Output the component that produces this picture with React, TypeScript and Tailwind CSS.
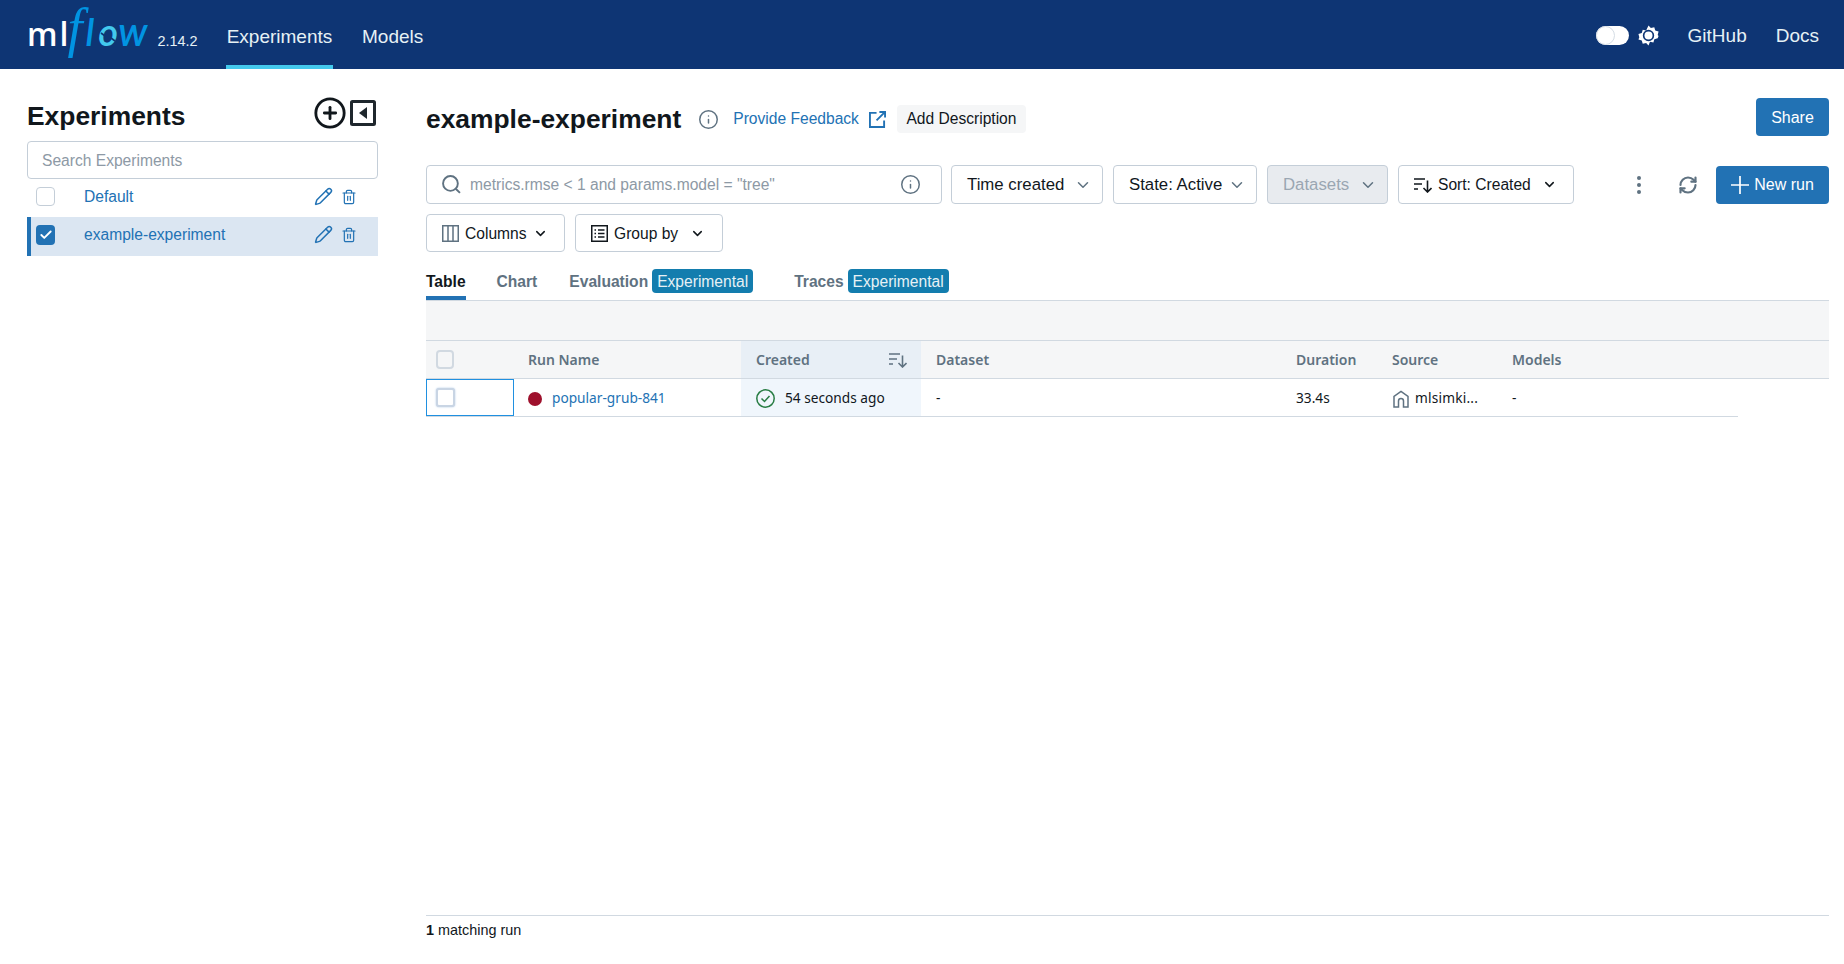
import type { ReactNode } from "react";
import { Check, ChevronDown, CirclePlus, Info, Pencil, RefreshCw, Trash2 } from "lucide-react";

function Logo() {
  return (
    <div className="ml-[27px] flex h-full w-[199px] items-end pb-[11px]">
      <span className="flex items-baseline leading-none">
        <span className="[font-family:'Open_Sans',sans-serif] text-[32px] font-semibold tracking-[2px] text-white">ml</span>
        <span className="ml-[-7px] px-[4px] [font-family:'Liberation_Serif',serif] text-[54px] italic leading-[60px] text-[#0194e2]">f</span>
        <span className="ml-[-1px] [font-family:'Lato',sans-serif] text-[38px] font-semibold italic text-[#0194e2]">l</span>
        <span className="relative ml-[4px] [font-family:'Lato',sans-serif] text-[38px] font-semibold italic text-[#43c9ed]">
          o
          <svg viewBox="0 0 20 20" className="absolute bottom-[3px] left-0 h-[20px] w-[20px]" fill="none" stroke="#0e3574" strokeWidth="1.6">
            <path d="M3 6l4 3M17 14l-4-3" />
          </svg>
        </span>
        <span className="[font-family:'Lato',sans-serif] text-[40px] font-semibold italic tracking-[1px] text-[#0194e2]">w</span>
        <span className="ml-[9px] text-[14.4px] text-[#e6f1f5]">2.14.2</span>
      </span>
    </div>
  );
}

function Header() {
  return (
    <header className="flex h-[69px] shrink-0 items-stretch bg-[#0e3574] text-[#e6f1f5]">
      <Logo />
      <nav className="flex gap-[29px] text-[19px]">
        <div className="flex w-[107px] items-center justify-center border-b-4 border-[#43c9ed] pt-[9px]">Experiments</div>
        <div className="flex items-center pt-[5px]">Models</div>
      </nav>
      <div className="ml-auto flex items-center pr-[25px] pt-[4px] text-[19px]">
        <div className="relative mb-[3px] h-[19px] w-[33px] rounded-full bg-white">
          <span className="absolute left-0 top-0 h-[19px] w-[19px] rounded-full border border-[#d5dde5] bg-white" />
        </div>
        <svg viewBox="0 0 24 24" className="mb-[3px] ml-[9px] h-[21px] w-[21px]" fill="#ffffff">
          <path fillRule="evenodd" d="M12 .5l2.7 3 3.9-1 1.1 3.8 3.8 1.1-1 3.9 1 1.4-1 2.5-3.8 1.1-1.1 3.8-3.9-1L12 23.5l-2.7-3-3.9 1-1.1-3.8-3.8-1.1 1-2.5-1-3.9 3.8-1.1 1.1-3.8 3.9 1L12 .5zM12 5.5a6.5 6.5 0 1 0 0 13 6.5 6.5 0 0 0 0-13z" />
          <circle cx="12" cy="12" r="4.6" />
        </svg>
        <span className="ml-[29px]">GitHub</span>
        <span className="ml-[29px]">Docs</span>
      </div>
    </header>
  );
}

function CheckBox({ checked = false }: { checked?: boolean }) {
  return checked ? (
    <span className="flex h-[20px] w-[19px] items-center justify-center rounded-[4px] bg-[#2272b4]">
      <Check size={14} strokeWidth={3.2} color="#ffffff" />
    </span>
  ) : (
    <span className="block h-[19px] w-[19px] rounded-[4px] border border-[#c4ced8] bg-white" />
  );
}

function ExperimentRow({ name, selected = false }: { name: string; selected?: boolean }) {
  return (
    <div
      className={
        selected
          ? "flex h-[39px] items-center border-l-4 border-[#2272b4] bg-[#dbe6f2] pb-[3px] pl-[5px] text-[#2272b4]"
          : "flex h-[38px] items-center pb-[3px] pl-[9px] text-[#2272b4]"
      }
    >
      <CheckBox checked={selected} />
      <span className="ml-[29px] text-[15.6px]">{name}</span>
      <Pencil size={19} strokeWidth={1.9} className="mb-[1px] ml-auto" />
      <Trash2 size={16} strokeWidth={1.8} className="ml-[8px] mr-[21px]" />
    </div>
  );
}

function Sidebar() {
  return (
    <aside className="w-[426px] shrink-0 pl-[27px] pr-[48px] pt-[29px]">
      <div className="flex h-[43px] items-start justify-between">
        <h2 className="text-[26.4px] font-bold leading-[36px] text-[#11171c]">Experiments</h2>
        <div className="flex items-center gap-[7px] text-[#11171c]">
          <CirclePlus size={34} strokeWidth={2} className="-mt-[2px] mr-[-4px]" />
          <svg viewBox="0 0 26 26" className="-mt-[2px] mr-[2px] h-[26px] w-[26px]">
            <rect x="1.5" y="1.5" width="23" height="23" fill="none" stroke="#1f272d" strokeWidth="3" rx="1" />
            <path d="M17 7v12l-8-6z" fill="#1f272d" />
          </svg>
        </div>
      </div>
      <div className="flex h-[38px] items-center rounded-[4px] border border-[#c4ced8] px-[14px] pt-[1px] text-[15.6px] text-[#8d99a5]">
        Search Experiments
      </div>
      <ExperimentRow name="Default" />
      <ExperimentRow name="example-experiment" selected />
    </aside>
  );
}

function DropButton({ label, icon, width, gap, size, disabled = false, strong = false }: { label: string; icon?: ReactNode; width: string; gap: string; size: string; disabled?: boolean; strong?: boolean }) {
  return (
    <div
      className={`flex items-center whitespace-nowrap rounded-[4px] border border-[#c4ced8] pl-[15px] pr-[8px] ${size} ${width} ${
        disabled ? "bg-[#e8ebef] text-[#9aa6b2]" : "bg-white text-[#11171c]"
      }`}
    >
      {icon}
      <span className="pt-[1px]">{label}</span>
      <ChevronDown size={strong ? 15 : 18} strokeWidth={strong ? 2.4 : 2} className={`shrink-0 ${gap}`} color={strong ? "#11171c" : "#5f7281"} />
    </div>
  );
}

function SortIcon({ color, className }: { color: string; className?: string }) {
  return (
    <svg viewBox="0 0 18 16" className={className} fill="none" stroke={color} strokeWidth="1.6">
      <path d="M0 2h11M0 7h8M0 12h4M13.5 3.5v11.5M9.5 11l4 4 4-4" />
    </svg>
  );
}

function Toolbar() {
  return (
    <>
      <div className="mt-[29px] flex h-[39px] items-stretch">
        <div className="flex w-[516px] items-center rounded-[4px] border border-[#c4ced8] pl-[15px] pr-[20px] text-[15.6px] text-[#8d99a5]">
          <svg viewBox="0 0 18 18" className="h-[19px] w-[19px]" fill="none" stroke="#5f7281" strokeWidth="1.8">
            <circle cx="8" cy="8" r="7" />
            <path d="M13 13l4 4" />
          </svg>
          <span className="ml-[9px]">metrics.rmse &lt; 1 and params.model = "tree"</span>
          <Info size={21} strokeWidth={1.7} color="#5f7281" className="ml-auto" />
        </div>
        <div className="ml-[9px] flex gap-[10px]">
          <DropButton label="Time created" size="text-[16.8px]" width="w-[152px]" gap="ml-[10px]" />
          <DropButton label="State: Active" size="text-[16.8px]" width="w-[144px]" gap="ml-[6px]" />
          <DropButton label="Datasets" size="text-[16.8px]" width="w-[121px]" gap="ml-[10px]" disabled />
          <DropButton label="Sort: Created" size="text-[15.6px]" width="w-[176px]" gap="ml-[11px]" strong icon={<SortIcon color="#11171c" className="mr-[6px] h-[16px] w-[18px]" />} />
        </div>
        <div className="ml-auto flex items-center">
          <svg viewBox="0 0 4 18" className="h-[18px] w-[4px]" fill="#5f7281">
            <circle cx="2" cy="2" r="2" />
            <circle cx="2" cy="9" r="2" />
            <circle cx="2" cy="16" r="2" />
          </svg>
          <RefreshCw size={20} strokeWidth={2.6} color="#5f7281" className="ml-[37px]" />
          <div className="ml-[18px] flex h-[38px] w-[113px] items-center justify-center gap-[5px] rounded-[4px] bg-[#2272b4] text-[16px] text-white">
            <svg viewBox="0 0 18 18" className="h-[18px] w-[18px]" stroke="#ffffff" strokeWidth="1.7">
              <path d="M9 0v18M0 9h18" />
            </svg>
            New run
          </div>
        </div>
      </div>
      <div className="mt-[10px] flex h-[38px] gap-[10px]">
        <DropButton
          label="Columns"
          size="text-[15.6px]"
          width="w-[139px]"
          gap="ml-[6px]"
          strong
          icon={
            <svg viewBox="0 0 17 17" className="mr-[6px] h-[17px] w-[17px]" fill="none" stroke="#5f7281" strokeWidth="1.5">
              <rect x="0.75" y="0.75" width="15.5" height="15.5" />
              <path d="M6 1v15M11 1v15" />
            </svg>
          }
        />
        <DropButton
          label="Group by"
          size="text-[15.6px]"
          width="w-[148px]"
          gap="ml-[12px]"
          strong
          icon={
            <svg viewBox="0 0 17 17" className="mr-[6px] h-[17px] w-[17px]" fill="none" stroke="#11171c" strokeWidth="1.5">
              <rect x="0.75" y="0.75" width="15.5" height="15.5" />
              <path d="M3.5 5H5M7 5h6.5M3.5 8.5H5M7 8.5h6.5M3.5 12H5M7 12h6.5" />
            </svg>
          }
        />
      </div>
    </>
  );
}

function Tab({ label, active = false, badge = false, className = "" }: { label: string; active?: boolean; badge?: boolean; className?: string }) {
  return (
    <div className={`flex h-[48px] items-stretch ${className}`}>
      <div className={`flex items-center border-b-4 pt-[15px] text-[15.6px] font-bold ${active ? "border-[#2272b4] text-[#11171c]" : "border-transparent text-[#5f7281]"}`}>
        {label}
      </div>
      {badge && (
        <span className="ml-[4px] mt-[17px] flex h-[24px] w-[101px] items-center justify-center rounded-[4px] bg-[#137dae] pt-[1px] text-[15.6px] text-[#e6f1f5]">
          Experimental
        </span>
      )}
    </div>
  );
}

function RunsTable() {
  return (
    <div className="[font-family:'Noto_Sans',sans-serif]">
      <div className="h-[41px] border-b border-t border-[#d1d9e1] bg-[#f5f6f7]" />
      <div className="flex h-[38px] border-b border-[#d1d9e1] bg-[#f5f6f7] text-[14px] font-semibold text-[#5f7281]">
        <div className="flex w-[88px] items-center pl-[10px]">
          <span className="block h-[19px] w-[18px] rounded-[4px] border-2 border-[#d1d9e1]" />
        </div>
        <div className="flex w-[227px] items-center pl-[14px]">Run Name</div>
        <div className="flex w-[180px] items-center justify-between bg-[#e8eff6] pl-[15px] pr-[14px]">
          Created
          <SortIcon color="#5f7281" className="h-[16px] w-[18px]" />
        </div>
        <div className="flex w-[360px] items-center pl-[15px]">Dataset</div>
        <div className="flex w-[96px] items-center pl-[15px]">Duration</div>
        <div className="flex w-[120px] items-center pl-[15px]">Source</div>
        <div className="flex items-center pl-[15px]">Models</div>
      </div>
      <div className="flex h-[38px] w-[1312px] border-b border-[#d1d9e1] text-[13.7px] text-[#11171c]">
        <div className="flex w-[88px] items-center border border-[#2090e0] pl-[9px]">
          <span className="block h-[19px] w-[19px] rounded-[3px] border-2 border-[#c9d5e4] bg-white shadow-[0_0_2px_#a9c4e4]" />
        </div>
        <div className="flex w-[227px] items-center pl-[14px] pt-[2px] text-[#2272b4]">
          <span className="h-[14px] w-[14px] rounded-full bg-[#9e102c]" />
          <span className="ml-[10px]">popular-grub-841</span>
        </div>
        <div className="flex w-[180px] items-center bg-[#f0f6fc] pl-[15px] pt-[2px]">
          <svg viewBox="0 0 19 19" className="h-[19px] w-[19px]" fill="none" stroke="#277c43" strokeWidth="1.5">
            <circle cx="9.5" cy="9.5" r="8.7" />
            <path d="M5.5 9.5l3 3 5-5.5" />
          </svg>
          <span className="ml-[10px]">54 seconds ago</span>
        </div>
        <div className="flex w-[360px] items-center pl-[15px] pt-[2px]">-</div>
        <div className="flex w-[96px] items-center pl-[15px] pt-[2px]">33.4s</div>
        <div className="flex w-[120px] items-center pl-[15px] pt-[2px]">
          <svg viewBox="0 0 18 18" className="h-[18px] w-[18px] shrink-0" fill="none" stroke="#5f7281" strokeWidth="1.5">
            <path d="M2 17V6.5L9 1.5l7 5V17h-4.5v-6a2.5 2.5 0 0 0-5 0v6z" />
          </svg>
          <span className="ml-[5px] tracking-[0.2px]">mlsimki...</span>
        </div>
        <div className="flex items-center pl-[15px] pt-[2px]">-</div>
      </div>
    </div>
  );
}

export default function App() {
  return (
    <div className="flex h-[964px] flex-col overflow-hidden bg-white [font-family:'Liberation_Sans',Arial,sans-serif]">
      <Header />
      <div className="flex min-h-0 flex-1">
        <Sidebar />
        <main className="flex min-w-0 flex-1 flex-col pb-[22px] pr-[15px] pt-[29px]">
          <div className="flex h-[38px] items-center">
            <div className="mt-[4px] flex items-center">
              <h1 className="pt-[1px] text-[26.4px] font-bold text-[#11171c]">example-experiment</h1>
              <Info size={21} strokeWidth={1.7} color="#5f7281" className="ml-[17px]" />
              <span className="ml-[14px] text-[15.6px] text-[#2272b4]">Provide Feedback</span>
              <svg viewBox="0 0 18 18" className="ml-[10px] h-[17px] w-[17px]" fill="none" stroke="#2272b4" strokeWidth="2">
                <path d="M8 2H1v15h15v-7M11 1h6v6M17 1L8 10" />
              </svg>
              <span className="ml-[11px] flex h-[28px] w-[129px] items-center justify-center rounded-[4px] bg-[#f5f6f7] text-[15.6px] text-[#11171c]">
                Add Description
              </span>
            </div>
            <span className="ml-auto flex h-[38px] w-[73px] items-center justify-center rounded-[4px] bg-[#2272b4] pt-[1px] text-[16px] text-white">
              Share
            </span>
          </div>
          <Toolbar />
          <div className="flex">
            <Tab label="Table" active />
            <Tab label="Chart" className="ml-[31px]" />
            <Tab label="Evaluation" badge className="ml-[32px]" />
            <Tab label="Traces" badge className="ml-[41px]" />
          </div>
          <RunsTable />
          <div className="mt-auto flex h-[27px] items-end border-t border-[#d1d9e1] text-[14.4px] text-[#11171c]">
            <span>
              <b>1</b> matching run
            </span>
          </div>
        </main>
      </div>
    </div>
  );
}
